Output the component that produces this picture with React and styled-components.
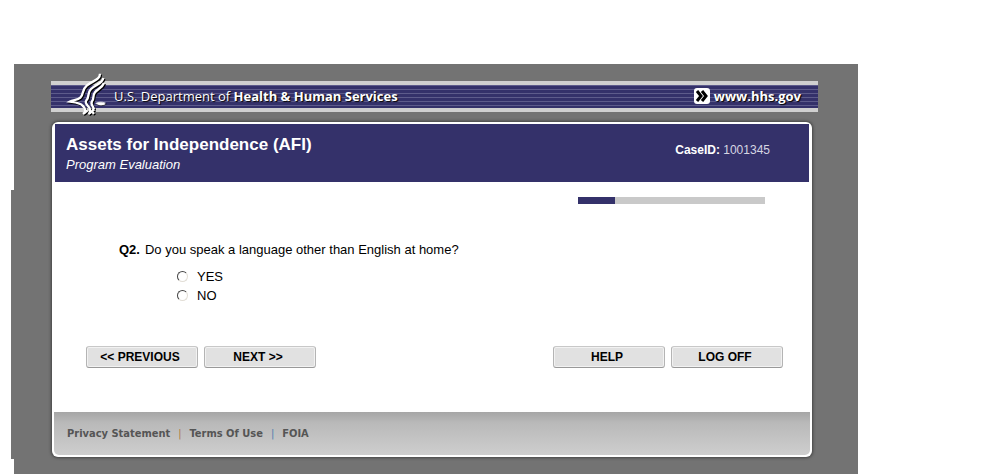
import React, { useState } from 'react'
import styled, { createGlobalStyle } from 'styled-components'

const GlobalStyle = createGlobalStyle`
    * {
        box-sizing : border-box;
    }

    body {
        margin : 0;
        background : white;
        font-family : "Liberation Sans", Arial, sans-serif;
        color : black;
    }
`

function EagleLogo() {
    const feathers = (
        <>
            <path d="M102 11 C102 30 80 32 62 47 C46 61 54 73 43 83 C35 90 22 90 12 95 C26 97 42 98 50 107 C56 113 60 119 56 129" />
            <path d="M112 24 C109 42 89 43 75 57 C62 70 72 80 61 91 C55 99 64 105 70 113 C74 119 70 126 74 131" />
            <path d="M114 39 C108 54 97 54 87 67 C78 79 86 85 78 94 C72 103 82 108 84 118" />
            <path d="M89 100 C97 96 108 95 118 99 C110 105 100 106 89 100" fill="white" strokeWidth="2" />
            <path d="M51 132 L65 121 M67 132 L85 118 M77 123 L84 132" />
        </>
    )

    return (
        <Eagle viewBox="0 0 126 144" aria-hidden="true">
            <g fill="none" stroke="black" strokeWidth="7" transform="translate(3 3)">{feathers}</g>
            <g fill="none" stroke="white" strokeWidth="7">{feathers}</g>
        </Eagle>
    )
}

function App() {

    const [answer, setAnswer] = useState('');

    return (
        <>
            <GlobalStyle />
            <Backdrop>
                <Banner>
                    <Department>
                        <EagleLogo />
                        <span>U.S. Department of <b>Health &amp; Human Services</b></span>
                    </Department>
                    <SiteLink href="#">
                        <svg width="16" height="16" viewBox="0 0 16 16" aria-hidden="true">
                            <rect width="16" height="16" rx="3" fill="white" />
                            <path d="M3 3 L7 8 L3 13 M8 3 L12 8 L8 13" fill="none" stroke="black" strokeWidth="3" />
                        </svg>
                        www.hhs.gov
                    </SiteLink>
                </Banner>

                <Card>
                    <Header>
                        <div>
                            <Title>Assets for Independence (AFI)</Title>
                            <Subtitle>Program Evaluation</Subtitle>
                        </div>
                        <CaseId><b>CaseID:</b> 1001345</CaseId>
                    </Header>

                    <Survey onSubmit={(e) => e.preventDefault()}>
                        <Progress role="progressbar" aria-valuenow={20} aria-label="Progress">
                            <Filled style={{ width: '20%' }} />
                        </Progress>

                        <Question>
                            <legend><b>Q2.</b><span>Do you speak a language other than English at home?</span></legend>
                            {['YES', 'NO'].map((option) => (
                                <Option key={option}>
                                    <Radio
                                        name="q2"
                                        value={option}
                                        checked={answer === option}
                                        onChange={() => setAnswer(option)}
                                    />
                                    {option}
                                </Option>
                            ))}
                        </Question>

                        <Actions>
                            <ButtonGroup>
                                <Button type="button">&lt;&lt; PREVIOUS</Button>
                                <Button type="submit">NEXT &gt;&gt;</Button>
                            </ButtonGroup>
                            <ButtonGroup>
                                <Button type="button">HELP</Button>
                                <Button type="button">LOG OFF</Button>
                            </ButtonGroup>
                        </Actions>
                    </Survey>

                    <Footer>
                        <a href="#">Privacy Statement</a>
                        <Divider $color="#b07a40">|</Divider>
                        <a href="#">Terms Of Use</a>
                        <Divider $color="#4f80b0">|</Divider>
                        <a href="#">FOIA</a>
                    </Footer>
                </Card>
            </Backdrop>
        </>
    )
}

export default App

const Backdrop = styled.div`
    position : relative;
    margin : 64px 137px 0 14px;
    min-height : calc(100vh - 64px);
    padding : 17px 40px 16px 37px;
    background : #737373;

    /* strip along the left edge */
    &::before {
        content : '';
        position : absolute;
        left : -3px;
        top : 126px;
        bottom : 15px;
        width : 3px;
        background : #737373;
    }
`

const Banner = styled.header`
    display : flex;
    justify-content : space-between;
    align-items : center;
    height : 31px;
    padding : 0 17px 2px 15px;
    border-top : 4px solid #d0d0d0;
    border-bottom : 4px solid #d0d0d0;
    background : repeating-linear-gradient(#5d5b8b 0 1px, #34316a 1px 4px);
    font-family : "Open Sans", "Noto Sans", sans-serif;
    color : white;
    text-shadow : 1px 1px 1px black;
`

const Department = styled.div`
    display : flex;
    align-items : center;
    gap : 6px;
    font-size : 13px;
    white-space : nowrap;
`

const Eagle = styled.svg`
    width : 42px;
    height : 48px;
    margin : -16px 0 -13px;
`

const SiteLink = styled.a`
    display : flex;
    align-items : center;
    gap : 4px;
    font-size : 13px;
    font-weight : 700;
    color : white;
    text-decoration : none;
`

const Card = styled.main`
    margin : 10px 6px 0 1px;
    padding : 2px;
    border-radius : 6px;
    background : white;
    box-shadow : 0 0 3px 1px #444;
`

const Header = styled.div`
    display : flex;
    justify-content : space-between;
    align-items : center;
    height : 58px;
    margin : 0 1px;
    padding : 2px 39px 0 11px;
    background : #34316a;
    color : white;
`

const Title = styled.h1`
    margin : 0 0 2px;
    font-size : 17px;
    line-height : 20px;
`

const Subtitle = styled.p`
    margin : 0;
    font-size : 13px;
    line-height : 16px;
    font-style : italic;
`

const CaseId = styled.div`
    margin-bottom : 8px;
    font-size : 12px;
    color : #d6d6e2;

    b {
        color : white;
    }
`

const Survey = styled.form`
    padding : 15px 27px 44px 32px;
`

const Progress = styled.div`
    width : 187px;
    height : 7px;
    margin : 0 18px 0 auto;
    background : #c9c9c9;
`

const Filled = styled.div`
    height : 100%;
    background : #34316a;
`

const Question = styled.fieldset`
    margin : 37px 0 0 33px;
    padding : 0;
    border : 0;
    font-size : 13px;

    legend {
        display : flex;
        gap : 5px;
        padding : 0;
        margin-bottom : 8px;
        line-height : 18px;
    }
`

const Option = styled.label`
    display : flex;
    align-items : center;
    gap : 9px;
    width : max-content;
    margin-left : 58px;
    line-height : 19px;
`

const Radio = styled.input.attrs({ type: 'radio' })`
    appearance : none;
    width : 11px;
    height : 11px;
    margin : 0;
    border : 1px solid;
    border-color : #444 #e2ded6 #e2ded6 #444;
    border-radius : 50%;

    &:checked {
        background : radial-gradient(black 0 2px, white 3px);
    }
`

const Actions = styled.div`
    display : flex;
    justify-content : space-between;
    margin-top : 41px;
`

const ButtonGroup = styled.div`
    display : flex;
    gap : 6px;
`

const Button = styled.button`
    width : 112px;
    height : 22px;
    padding : 0 4px 0 0;
    border : 1px solid;
    border-color : #c8c8c8 #b4b4b4 #999 #b4b4b4;
    border-radius : 3px;
    background : #e1e1e1;
    box-shadow : inset 0 0 0 1px #f2f2f2;
    font-family : inherit;
    font-size : 12px;
    font-weight : 700;
    color : black;
    cursor : pointer;
`

const Footer = styled.footer`
    display : flex;
    align-items : center;
    gap : 8px;
    height : 43px;
    padding : 0 13px;
    border-radius : 0 0 5px 5px;
    background : linear-gradient(#a6a6a6, #b9b9b9 25%, #cecece);
    font-family : "DejaVu Sans Condensed", "DejaVu Sans", sans-serif;
    font-size : 11px;
    font-weight : 700;

    a {
        color : #555;
        text-decoration : none;
    }
`

const Divider = styled.span`
    font-weight : 400;
    color : ${props => props.$color};
`
